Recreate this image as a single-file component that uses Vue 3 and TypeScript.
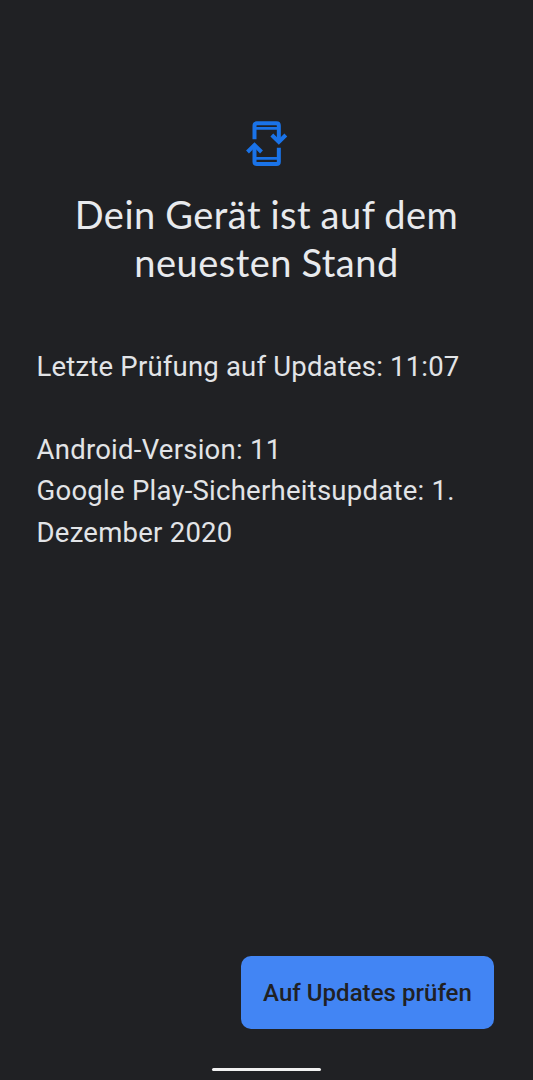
<script setup lang="ts">
const titleLines: string[] = ['Dein Gerät ist auf dem', 'neuesten Stand']
const details: string[] = [
  'Android-Version: 11',
  'Google Play-Sicherheitsupdate: 1.',
  'Dezember 2020',
]
</script>

<template>
  <main class="screen">
    <header class="header">
      <svg class="icon" viewBox="0 0 186 198" fill="none" stroke="#1a73e8" stroke-width="12">
        <path d="M55.5 88V47Q55.5 40 62.5 40H121.5Q128.5 40 128.5 47V96" />
        <path d="M56 55H128M56 145H128" stroke-width="8.5" />
        <path d="M128.5 113V155Q128.5 162 121.5 162H62.5Q55.5 162 55.5 155V105" />
        <path d="M107.5 75L128.5 96L149.5 75M34.5 126L55.5 105L76.5 126" />
      </svg>
      <h1 class="title">
        <span v-for="line in titleLines" :key="line" class="line">{{ line }}</span>
      </h1>
    </header>
    <section class="content">
      <p class="check">Letzte Prüfung auf Updates: 11:07</p>
      <p class="info">
        <span v-for="line in details" :key="line" class="line">{{ line }}</span>
      </p>
    </section>
    <footer class="footer">
      <button class="button" type="button">Auf Updates prüfen</button>
      <div class="handle"></div>
    </footer>
  </main>
</template>

<style>
body {
  margin: 0;
  background: #202124;
}
</style>

<style scoped>
.screen {
  box-sizing: border-box;
  width: 533px;
  height: 1080px;
  padding-top: 110px;
  display: flex;
  flex-direction: column;
  background: #202124;
  color: #e8eaed;
  font-family: Roboto, sans-serif;
  overflow: hidden;
}
.header {
  display: flex;
  flex-direction: column;
  align-items: center;
}
.icon {
  width: 62px;
  height: 66px;
}
.title {
  margin: 14px 0 0;
  font: 400 38px/48px Lato, sans-serif;
  letter-spacing: 0.5px;
  word-spacing: -0.8px;
  text-align: center;
}
.line {
  display: block;
  white-space: nowrap;
}
.content {
  margin-top: 60px;
  padding-left: 36.5px;
  font-size: 27.5px;
  line-height: 41.4px;
  letter-spacing: 0.2px;
  color: #e2e4e7;
}
.check,
.info {
  margin: 0;
}
.info {
  margin-top: 41.4px;
  letter-spacing: 0.25px;
}
.footer {
  margin-top: auto;
  display: flex;
  flex-direction: column;
}
.button {
  align-self: flex-end;
  width: 253px;
  height: 73px;
  margin-right: 39px;
  padding: 0;
  border: 0;
  border-radius: 10px;
  background: #4285f4;
  color: #202124;
  font: 500 24px/75px Roboto, sans-serif;
  letter-spacing: 0.04px;
  white-space: nowrap;
}
.handle {
  align-self: center;
  width: 109px;
  height: 3px;
  margin: 39px 0 9px;
  border-radius: 2px;
  background: #f1f1f1;
}
</style>
